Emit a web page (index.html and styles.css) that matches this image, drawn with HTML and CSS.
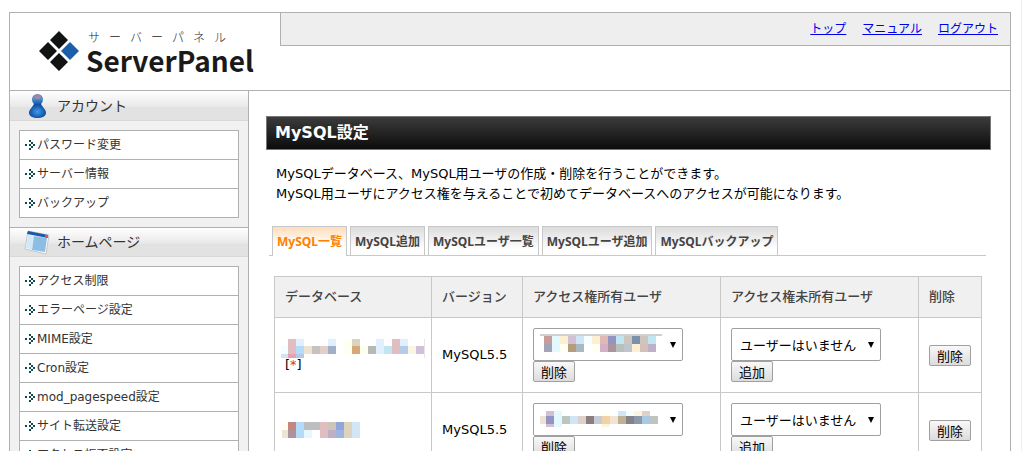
FILE: index.html
```html
<!DOCTYPE html>
<html lang="ja">
<head>
  <meta charset="UTF-8">
  <title>サーバーパネル</title>
  <link rel="stylesheet" href="styles.css">
</head>
<body>

  <!-- Shared shapes -->
  <svg class="defs" width="0" height="0" aria-hidden="true">
    <symbol id="arrow" viewBox="0 0 10 10">
      <path fill="#0f4a50" d="M0 4h2v2H0zM4 0h2v2H4zM6 2h2v2H6zM8 4h2v2H8zM6 6h2v2H6zM4 8h2v2H4zM4 4h2v2H4z"/>
    </symbol>
  </svg>

  <div id="wrapper">

    <!-- Header -->
    <header class="header">
      <div class="logo">
        <svg width="42" height="42" viewBox="0 0 42 42">
          <path fill="#111413" d="M21 1l9 9-9 9-9-9zM10 12l9 9-9 9-9-9zM21 23l9 9-9 9-9-9z"/>
          <path fill="#1c5fa9" d="M32 12l9 9-9 9-9-9z"/>
        </svg>
        <div class="logo-text">
          <span class="logo-kana">サーバーパネル</span>
          <span class="logo-name">ServerPanel</span>
        </div>
      </div>
      <nav class="topnav">
        <a href="#">トップ</a>
        <a href="#">マニュアル</a>
        <a href="#">ログアウト</a>
      </nav>
    </header>

    <div class="columns">

      <!-- Side menu -->
      <aside class="sidebar">
        <h2>
          <svg width="26" height="26" viewBox="0 0 26 26">
            <defs>
              <radialGradient id="body" cx="50%" cy="55%" r="60%">
                <stop offset="0" stop-color="#3d9be8"/>
                <stop offset="1" stop-color="#073c94"/>
              </radialGradient>
              <linearGradient id="head" x1="0" y1="0" x2="0" y2="1">
                <stop offset="0" stop-color="#7878a8"/>
                <stop offset="0.45" stop-color="#4a90d0"/>
                <stop offset="1" stop-color="#0b4aa6"/>
              </linearGradient>
            </defs>
            <path fill="url(#body)" d="M10 11h7c1 3 5 5 5 9 0 3-4 5-8.500 5S5 23 5 20c0-4 4-6 5-9z"/>
            <ellipse cx="13.500" cy="6.500" rx="5.500" ry="5.500" fill="url(#head)"/>
            <ellipse cx="13.500" cy="4" rx="3.500" ry="2" fill="#9a8aa8"/>
          </svg>
          アカウント
        </h2>
        <ul>
          <li><a href="#"><svg><use href="#arrow"/></svg>パスワード変更</a></li>
          <li><a href="#"><svg><use href="#arrow"/></svg>サーバー情報</a></li>
          <li><a href="#"><svg><use href="#arrow"/></svg>バックアップ</a></li>
        </ul>

        <h2>
          <svg width="26" height="26" viewBox="0 0 26 26">
            <path fill="#fdfdfd" stroke="#c4c8cc" d="M4 2l21 4-3 19L1 20z"/>
            <path fill="#d3e8f7" d="M4 6l6 1-2 14-6-2z"/>
            <path fill="#8dbde2" d="M10 7l13 2-2 14-13-2z"/>
            <path fill="#1b58a8" d="M4 2l20 4v3L3 5z"/>
            <path fill="#f0523a" d="M21 6l3 0v3l-3-1z"/>
          </svg>
          ホームページ
        </h2>
        <ul>
          <li><a href="#"><svg><use href="#arrow"/></svg>アクセス制限</a></li>
          <li><a href="#"><svg><use href="#arrow"/></svg>エラーページ設定</a></li>
          <li><a href="#"><svg><use href="#arrow"/></svg>MIME設定</a></li>
          <li><a href="#"><svg><use href="#arrow"/></svg>Cron設定</a></li>
          <li><a href="#"><svg><use href="#arrow"/></svg>mod_pagespeed設定</a></li>
          <li><a href="#"><svg><use href="#arrow"/></svg>サイト転送設定</a></li>
          <li><a href="#"><svg><use href="#arrow"/></svg>アクセス拒否設定</a></li>
        </ul>
      </aside>

      <!-- Main -->
      <main class="main">
        <h1>MySQL設定</h1>
        <p class="lead">
          MySQLデータベース、MySQL用ユーザの作成・削除を行うことができます。<br>
          MySQL用ユーザにアクセス権を与えることで初めてデータベースへのアクセスが可能になります。
        </p>

        <nav class="tabs">
          <a href="#" class="active">MySQL一覧</a>
          <a href="#">MySQL追加</a>
          <a href="#">MySQLユーザ一覧</a>
          <a href="#">MySQLユーザ追加</a>
          <a href="#">MySQLバックアップ</a>
        </nav>

        <table class="db-table">
          <colgroup>
            <col>
            <col class="col-version">
            <col class="col-user">
            <col class="col-user">
            <col class="col-delete">
          </colgroup>
          <thead>
            <tr>
              <th>データベース</th>
              <th>バージョン</th>
              <th>アクセス権所有ユーザ</th>
              <th>アクセス権未所有ユーザ</th>
              <th>削除</th>
            </tr>
          </thead>
          <tbody>
            <tr>
              <td class="db-name">
                <svg class="mosaic" width="144" height="19" viewBox="33 201 432 57">
                  <path fill="#e0bec0" d="M54 201h24v45H54zM366 201h24v45h-24z"/>
                  <path fill="#e0f0ff" d="M78 201h24v21H78zM174 201h24v21h-24zM318 201h24v45h-24zM390 201h24v21h-24z"/>
                  <path fill="#fffff0" d="M222 201h24v45h-24zM270 222h24v24h-24z"/>
                  <path fill="#dcd2c0" d="M246 201h24v21h-24z"/>
                  <path fill="#f0ffff" d="M33 222h21v24H33z"/>
                  <path fill="#b4dcfa" d="M78 222h24v24H78z"/>
                  <path fill="#f0e2d2" d="M102 222h24v24h-24z"/>
                  <path fill="#c6c2c0" d="M126 222h24v24h-24z"/>
                  <path fill="#e2d0c8" d="M150 222h24v24h-24z"/>
                  <path fill="#a0b0c8" d="M174 222h24v24h-24z"/>
                  <path fill="#d6a878" d="M246 222h24v24h-24z"/>
                  <path fill="#b8b8b4" d="M294 222h24v24h-24z"/>
                  <path fill="#bfe6f2" d="M342 222h24v24h-24z"/>
                  <path fill="#b4cce8" d="M390 222h24v24h-24z"/>
                  <path fill="#faf6e4" d="M414 222h24v24h-24z"/>
                  <path fill="#d2c0d8" d="M438 222h24v24h-24z"/>
                  <path fill="#d2e4f4" d="M33 246h21v12H33z"/>
                  <path fill="#eaa0b4" d="M54 246h24v12H54z"/>
                  <path fill="#b8c8e4" d="M78 246h24v12H78z"/>
                  <path fill="#e4e4ea" d="M462 201h3v57h-3z"/>
                </svg>
                <span class="mark">[<em>*</em>]</span>
              </td>
              <td>MySQL5.5</td>
              <td>
                <div class="select-box">
                  <select aria-label="アクセス権所有ユーザ"><option></option></select>
                  <svg class="mosaic over" width="122" height="18" viewBox="60 192 366 54">
                    <path fill="#d0d0d0" d="M60 192h366v6H60z"/>
                    <path fill="#c89c98" d="M72 198h24v24H72z"/>
                    <path fill="#e4f8ff" d="M96 198h24v48H96z"/>
                    <path fill="#fdf0d2" d="M120 198h24v24h-24zM216 198h24v24h-24zM336 222h24v24h-24z"/>
                    <path fill="#d2c0d4" d="M144 198h24v24h-24z"/>
                    <path fill="#d0e6f6" d="M168 198h24v24h-24z"/>
                    <path fill="#f6ffff" d="M192 198h24v24h-24z"/>
                    <path fill="#e0b8b4" d="M240 198h24v24h-24z"/>
                    <path fill="#9494c4" d="M264 198h24v24h-24z"/>
                    <path fill="#c0e6f2" d="M288 198h24v24h-24zM384 198h24v24h-24z"/>
                    <path fill="#ccc6be" d="M312 198h24v24h-24zM360 198h24v24h-24z"/>
                    <path fill="#7c90aa" d="M336 198h24v24h-24z"/>
                    <path fill="#a4a4b8" d="M72 222h24v24H72z"/>
                    <path fill="#fffff2" d="M120 222h24v24h-24zM216 222h24v24h-24z"/>
                    <path fill="#b49c7c" d="M144 222h24v24h-24z"/>
                    <path fill="#a8bac0" d="M168 222h24v24h-24z"/>
                    <path fill="#d4b0c4" d="M240 222h24v24h-24z"/>
                    <path fill="#ac949c" d="M264 222h24v24h-24z"/>
                    <path fill="#b8c0be" d="M288 222h24v24h-24z"/>
                    <path fill="#c0c4cc" d="M312 222h24v24h-24z"/>
                    <path fill="#d4c0b8" d="M360 222h24v24h-24z"/>
                    <path fill="#beb0c6" d="M384 222h24v24h-24z"/>
                  </svg>
                </div>
                <button type="button">削除</button>
              </td>
              <td>
                <select aria-label="アクセス権未所有ユーザ"><option>ユーザーはいません</option></select>
                <button type="button">追加</button>
              </td>
              <td><button type="button">削除</button></td>
            </tr>
            <tr>
              <td class="db-name">
                <svg class="mosaic" width="79" height="16" viewBox="33 462 237 48">
                  <path fill="#fffff0" d="M36 462h18v24H36z"/>
                  <path fill="#c4867e" d="M54 462h24v24H54z"/>
                  <path fill="#b4dcfa" d="M78 462h24v48H78z"/>
                  <path fill="#bcbec0" d="M102 462h48v24h-48z"/>
                  <path fill="#e0bec0" d="M150 462h24v48h-24z"/>
                  <path fill="#ccc6ba" d="M174 462h24v24h-24z"/>
                  <path fill="#90a6da" d="M198 462h24v24h-24z"/>
                  <path fill="#ded4be" d="M222 462h24v48h-24z"/>
                  <path fill="#d2e6f6" d="M246 462h24v48h-24z"/>
                  <path fill="#f0e2d4" d="M36 486h18v24H36z"/>
                  <path fill="#ac949a" d="M54 486h24v24H54z"/>
                  <path fill="#e6f8ff" d="M102 486h24v24h-24z"/>
                  <path fill="#beb0c4" d="M174 486h24v24h-24z"/>
                  <path fill="#a0b4e0" d="M198 486h24v24h-24z"/>
                </svg>
              </td>
              <td>MySQL5.5</td>
              <td>
                <div class="select-box">
                  <select aria-label="アクセス権所有ユーザ"><option></option></select>
                  <svg class="mosaic over" width="122" height="18" viewBox="54 417 366 54">
                    <path fill="#d2c0d2" d="M72 423h24v48H72z"/>
                    <path fill="#e4f8ff" d="M96 423h24v48H96z"/>
                    <path fill="#f0e2d2" d="M54 438h18v24H54z"/>
                    <path fill="#9494c4" d="M72 438h24v24H72z"/>
                    <path fill="#bec4be" d="M120 438h24v24h-24zM384 438h24v24h-24z"/>
                    <path fill="#d0e6f8" d="M144 438h24v24h-24zM288 423h24v15h-24z"/>
                    <path fill="#e0d0ca" d="M168 438h24v24h-24zM360 423h24v15h-24z"/>
                    <path fill="#8a7e80" d="M192 438h24v24h-24z"/>
                    <path fill="#c6ccd6" d="M216 438h24v24h-24z"/>
                    <path fill="#fffff2" d="M240 423h24v15h-24z"/>
                    <path fill="#f2d2a2" d="M240 438h24v24h-24z"/>
                    <path fill="#fdf4e0" d="M240 462h24v9h-24zM336 423h24v15h-24z"/>
                    <path fill="#f2e4d0" d="M264 438h24v24h-24z"/>
                    <path fill="#c0b096" d="M288 438h24v24h-24z"/>
                    <path fill="#f0ffff" d="M312 423h24v15h-24z"/>
                    <path fill="#848288" d="M312 438h24v24h-24z"/>
                    <path fill="#8c98ac" d="M336 438h24v24h-24z"/>
                    <path fill="#a8c8e4" d="M360 438h24v24h-24z"/>
                  </svg>
                </div>
                <button type="button">削除</button>
              </td>
              <td>
                <select aria-label="アクセス権未所有ユーザ"><option>ユーザーはいません</option></select>
                <button type="button">追加</button>
              </td>
              <td><button type="button">削除</button></td>
            </tr>
          </tbody>
        </table>
      </main>

    </div>
  </div>

</body>
</html>
```
FILE: styles.css
```css
* {
  box-sizing: border-box;
}

body {
  margin: 0;
  padding: 12px 10px 0 9px;
  border-right: 1px solid #eee;
  background: #fff;
  color: #000;
  font-family: "DejaVu Sans", "Noto Sans CJK JP", sans-serif;
  font-size: 13px;
  line-height: 20px;
}

.defs {
  display: block;
}

#wrapper {
  border: 1px solid #b0b0b0;
}

/* Header */
.header {
  display: flex;
  justify-content: space-between;
  align-items: flex-start;
  border-bottom: 1px solid #b0b0b0;
}

.logo {
  display: flex;
  align-items: center;
  gap: 6px;
  width: 270px;
  height: 77px;
  padding: 0 0 2px 28px;
}

.logo-text {
  display: flex;
  flex-direction: column;
  font-family: "Noto Sans CJK JP", sans-serif;
  color: #1a1a1a;
}

.logo-kana {
  width: 140px;
  padding-left: 2px;
  font-size: 12px;
  font-weight: 300;
  line-height: 18px;
  text-align-last: justify;
  text-justify: inter-character;
}

.logo-name {
  font-size: 28px;
  line-height: 28px;
  font-weight: bold;
}

.topnav {
  flex: 1;
  display: flex;
  justify-content: flex-end;
  gap: 16px;
  height: 33px;
  padding: 6px 12px 0 0;
  background: #eee;
  border-left: 1px solid #b0b0b0;
  border-bottom: 1px solid #b0b0b0;
  font-size: 12px;
}

.topnav a {
  color: #0000ee;
}

/* Side menu */
.columns {
  display: flex;
}

.sidebar {
  width: 239px;
  background: #f1f1f1;
  border-right: 1px solid #b0b0b0;
}

.sidebar h2 {
  display: flex;
  align-items: center;
  gap: 7px;
  height: 30px;
  margin: 0;
  padding-left: 14px;
  background: linear-gradient(#fff, #e8e8e8 55%, #e2e2e2 56%);
  border-bottom: 1px solid #d8d8d8;
  color: #333;
  font-size: 14px;
  font-weight: normal;
}

.sidebar ul {
  margin: 9px;
  padding: 0;
  list-style: none;
  background: #fff;
  border: 1px solid #b0b0b0;
}

.sidebar ul + h2 {
  border-top: 1px solid #b0b0b0;
}

.sidebar li + li {
  border-top: 1px solid #b0b0b0;
}

.sidebar li a {
  display: flex;
  align-items: center;
  gap: 2px;
  height: 28px;
  padding-left: 5px;
  color: #333;
  font-size: 12px;
  text-decoration: none;
}

.sidebar li svg {
  width: 10px;
  height: 10px;
  shape-rendering: crispEdges;
}

/* Main */
.main {
  flex: 1;
  padding: 25px 19px 0 17px;
}

.main h1 {
  margin: 0;
  padding: 6px 8px;
  background: linear-gradient(#3c3c3c, #0c0c0c);
  border: 1px solid #777;
  color: #fff;
  font-size: 16px;
  line-height: 20px;
}

.lead {
  margin: 0;
  padding: 14px 10px 22px;
}

.tabs {
  display: flex;
  gap: 3px;
  margin: 0 5px 20px 3px;
  padding-left: 3px;
  border-bottom: 1px solid #c8c8c8;
}

.tabs a {
  height: 29px;
  padding: 5px 4px 0;
  background: linear-gradient(#dcdcdc, #fff 80%);
  border: 1px solid #c8c8c8;
  border-bottom: 0;
  color: #444;
  font-family: "Noto Sans", "Noto Sans CJK JP", sans-serif;
  font-size: 12px;
  font-weight: bold;
  text-decoration: none;
}

.tabs .active {
  margin-bottom: -1px;
  height: 30px;
  background: linear-gradient(#ffdcb8, #fff 60%);
  color: #ff8000;
}

/* Database list */
.db-table {
  width: calc(100% - 17px);
  margin-left: 8px;
  table-layout: fixed;
  border-collapse: collapse;
}

.col-version {
  width: 91px;
}

.col-user {
  width: 198px;
}

.col-delete {
  width: 63px;
}

.db-table th,
.db-table td {
  padding: 10px 9px 10px 10px;
  border: 1px solid #c8c8c8;
  text-align: left;
}

.db-table th {
  background: #f0f0f0;
  color: #444;
  font-weight: 500;
}

.db-table .db-name {
  padding: 0 6px;
}

.mosaic {
  display: block;
  shape-rendering: crispEdges;
}

.mark {
  display: block;
  padding-left: 4px;
  line-height: 14px;
}

.mark em {
  color: #e03010;
  font-style: normal;
}

.select-box {
  position: relative;
}

.over {
  position: absolute;
  top: 6px;
  left: 7px;
  pointer-events: none;
}

select {
  display: block;
  width: 150px;
  height: 33px;
  padding: 0 8px;
  appearance: none;
  background: #fff url("data:image/svg+xml,%3Csvg xmlns='http://www.w3.org/2000/svg' width='6' height='6'%3E%3Cpath d='M0 0h6L3 6z'/%3E%3C/svg%3E") no-repeat right 6px center;
  border: 1px solid #a0a0a0;
  border-radius: 2px;
  color: #000;
  font-family: "Noto Sans CJK JP", sans-serif;
  font-size: 13px;
}

button {
  display: block;
  width: 42px;
  height: 21px;
  padding: 0;
  background: linear-gradient(#f8f8f8, #dcdcdc);
  border: 1px solid #a0a0a0;
  border-radius: 2px;
  color: #000;
  font-family: "Noto Sans CJK JP", sans-serif;
  font-size: 13px;
  line-height: 17px;
}
```
